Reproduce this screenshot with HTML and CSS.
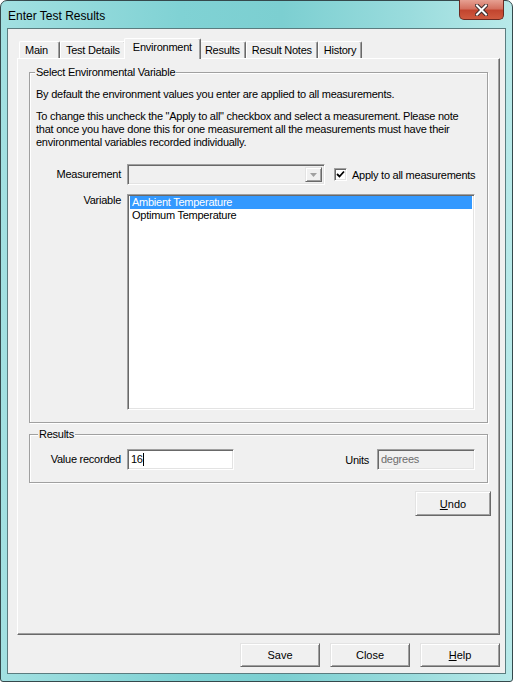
FILE: index.html
```html
<!DOCTYPE html>
<html lang="en">
<head>
    <meta charset="UTF-8">
    <title>Enter Test Results</title>
    <link rel="stylesheet" href="styles.css">
</head>
<body>

<div class="window">
    <div class="titlebar">
        <span class="title">Enter Test Results</span>
        <button class="close-btn" title="Close">
            <svg width="13" height="12" viewBox="0 0 13 12">
                <path d="M2 1.5 L11 10.5 M11 1.5 L2 10.5" stroke="#3b2a2a" stroke-width="4" stroke-linecap="square"/>
                <path d="M2 1.5 L11 10.5 M11 1.5 L2 10.5" stroke="#fff" stroke-width="2" stroke-linecap="square"/>
            </svg>
        </button>
    </div>

    <div class="client">
        <div class="tabs">
            <div class="tab tab-main">Main</div>
            <div class="tab">Test Details</div>
            <div class="tab active">Environment</div>
            <div class="tab">Results</div>
            <div class="tab">Result Notes</div>
            <div class="tab">History</div>
        </div>

        <div class="tab-panel">
            <fieldset class="group env-group">
                <legend>Select Environmental Variable</legend>
                <p class="note">By default the environment values you enter are applied to all measurements.</p>
                <p class="note">To change this uncheck the "Apply to all" checkbox and select a measurement. Please note<br>
                    that once you have done this for one measurement all the measurements must have their<br>
                    environmental variables recorded individually.</p>

                <div class="field-row measure-row">
                    <label class="field-label">Measurement</label>
                    <div class="combo disabled">
                        <span class="combo-arrow">
                            <svg width="7" height="4" viewBox="0 0 7 4"><path d="M0 0 H7 L3.5 4 Z" fill="#a0a0a0"/></svg>
                        </span>
                    </div>
                    <label class="check">
                        <span class="check-box">
                            <svg width="9" height="9" viewBox="0 0 9 9"><path d="M1 4 L3.5 6.5 L8 1.5" stroke="#000" stroke-width="1.8" fill="none"/></svg>
                        </span>
                        Apply to all measurements
                    </label>
                </div>

                <div class="field-row variable-row">
                    <label class="field-label">Variable</label>
                    <ul class="listbox">
                        <li class="selected">Ambient Temperature</li>
                        <li>Optimum Temperature</li>
                    </ul>
                </div>
            </fieldset>

            <fieldset class="group results-group">
                <legend>Results</legend>
                <div class="field-row">
                    <label class="field-label">Value recorded</label>
                    <div class="textbox value-box">16<span class="caret"></span></div>
                    <label class="units-label">Units</label>
                    <div class="textbox units-box">degrees</div>
                </div>
            </fieldset>

            <button class="btn undo-btn"><u>U</u>ndo</button>
        </div>

        <div class="footer">
            <button class="btn">Save</button>
            <button class="btn">Close</button>
            <button class="btn"><u>H</u>elp</button>
        </div>
    </div>
</div>

</body>
</html>
```

FILE: styles.css
```css
body {
    margin: 0;
    background: #fff;
    font-family: "Liberation Sans", Arial, sans-serif;
    font-size: 11px;
    letter-spacing: -0.25px;
    color: #000;
}
.window {
    box-sizing: border-box;
    width: 513px;
    height: 682px;
    border: 1px solid #35494c;
    border-radius: 7px 7px 3px 3px;
    padding: 0 6px 7px 6px;
    background: linear-gradient(to right, #a2e0e1, #80d2d4 35%, #7ccfd1 55%, #9adcdd 80%, #b8e9e9);
    display: flex;
    flex-direction: column;
}

/* title bar */
.titlebar {
    height: 27px;
    display: flex;
    align-items: flex-start;
}
.title {
    font-size: 12px;
    line-height: 14px;
    letter-spacing: 0;
    margin: 8px 0 0 1px;
}
.close-btn {
    width: 45px;
    height: 20px;
    margin: -1px 2px 0 auto;
    padding: 0;
    border: 1px solid #6b2a22;
    border-top: none;
    border-radius: 0 0 5px 5px;
    background: linear-gradient(to bottom, #e6a092, #d47160 45%, #c2452f 55%, #cf5a3f);
    display: flex;
    align-items: center;
    justify-content: center;
}

/* client area */
.client {
    flex: 1;
    border: 1px solid #5b7c7f;
    background: #f0f0f0;
    padding: 9px 5px 0 9px;
    display: flex;
    flex-direction: column;
}

/* tab strip */
.tabs {
    height: 20px;
    display: flex;
    align-items: flex-end;
    padding-left: 2px;
}
.tab {
    box-sizing: border-box;
    height: 17px;
    padding: 1px 5px 0 5px;
    line-height: 14px;
    border-top: 1px solid #fff;
    border-left: 1px solid #fff;
    border-right: 1px solid #696969;
    border-radius: 2px 2px 0 0;
    box-shadow: inset -1px 0 0 #a0a0a0;
    white-space: nowrap;
}
.tab-main {
    min-width: 41px;
}
.tab.active {
    position: relative;
    z-index: 1;
    height: 21px;
    margin: 0 -2px -1px -2px;
    padding: 1px 8px 0 8px;
    background: #f0f0f0;
}

.tab-panel {
    flex: 1;
    border-top: 1px solid #fff;
    border-left: 1px solid #fff;
    border-right: 1px solid #696969;
    border-bottom: 1px solid #696969;
    box-shadow: inset -1px -1px 0 #a0a0a0;
    padding: 7px 11px 0 11px;
    display: flex;
    flex-direction: column;
}

/* group boxes */
.group {
    margin: 0;
    padding: 0 12px 12px 6px;
    border: 1px solid #a0a0a0;
    box-shadow: 1px 1px 0 #fff, inset 1px 1px 0 #fff;
    min-width: 0;
}
.group legend {
    padding: 0 1px;
    margin-left: -1px;
    line-height: 13px;
    background: #f0f0f0;
}
.results-group {
    margin-top: 5px;
}
.results-group legend {
    margin-left: 2px;
}
.note {
    margin: 9px 0 0 0;
    line-height: 13px;
    white-space: nowrap;
}

.field-row {
    display: flex;
    align-items: center;
}
.field-row > * {
    flex: none;
}
.measure-row {
    margin-top: 15px;
}
.variable-row {
    margin-top: 9px;
    align-items: flex-start;
}
.results-group .field-row {
    margin-top: 8px;
}
.field-label {
    width: 85px;
    margin-right: 6px;
    text-align: right;
    line-height: 13px;
}

/* sunken controls */
.combo, .listbox, .textbox {
    box-sizing: border-box;
    border: 1px solid;
    border-color: #a0a0a0 #fff #fff #a0a0a0;
    box-shadow: inset 1px 1px 0 #696969, inset -1px -1px 0 #e3e3e3;
}
.combo {
    width: 198px;
    height: 21px;
    display: flex;
    justify-content: flex-end;
    padding: 2px;
}
.combo-arrow {
    box-sizing: border-box;
    width: 17px;
    height: 15px;
    border: 1px solid;
    border-color: #e3e3e3 #696969 #696969 #e3e3e3;
    box-shadow: inset 1px 1px 0 #fff, inset -1px -1px 0 #a0a0a0;
    display: flex;
    align-items: center;
    justify-content: center;
}
.check {
    display: flex;
    align-items: center;
    margin-left: 9px;
    white-space: nowrap;
}
.check-box {
    box-sizing: border-box;
    width: 13px;
    height: 13px;
    margin-right: 5px;
    background: #fff;
    border: 1px solid;
    border-color: #a0a0a0 #fff #fff #a0a0a0;
    box-shadow: inset 1px 1px 0 #696969, inset -1px -1px 0 #e3e3e3;
    display: flex;
    align-items: center;
    justify-content: center;
}
.listbox {
    list-style: none;
    margin: 0;
    width: 348px;
    height: 216px;
    padding: 1px 2px;
    background: #fff;
}
.listbox li {
    height: 13px;
    line-height: 13px;
    padding-left: 2px;
}
.listbox li.selected {
    background: #3399ff;
    color: #fff;
}
.textbox {
    height: 21px;
    padding: 3px 3px;
    line-height: 13px;
    background: #fff;
}
.value-box {
    width: 107px;
}
.caret {
    display: inline-block;
    width: 1px;
    height: 13px;
    background: #000;
    vertical-align: top;
}
.units-label {
    margin-left: auto;
    margin-right: 8px;
}
.units-box {
    width: 98px;
    background: #f0f0f0;
    color: #6d6d6d;
}

/* push buttons */
.btn {
    box-sizing: border-box;
    height: 24px;
    font: inherit;
    font-weight: normal;
    color: #000;
    background: #f0f0f0;
    border: 1px solid;
    border-color: #e3e3e3 #696969 #696969 #e3e3e3;
    box-shadow: inset 1px 1px 0 #fff, inset -1px -1px 0 #a0a0a0;
    padding: 0;
}
.undo-btn {
    align-self: flex-end;
    width: 76px;
    height: 25px;
    margin: 8px -3px 0 0;
}
.footer {
    height: 38px;
    box-sizing: border-box;
    padding: 8px 0 6px 0;
    display: flex;
    justify-content: flex-end;
    gap: 10px;
}
.footer .btn {
    width: 80px;
}
```
